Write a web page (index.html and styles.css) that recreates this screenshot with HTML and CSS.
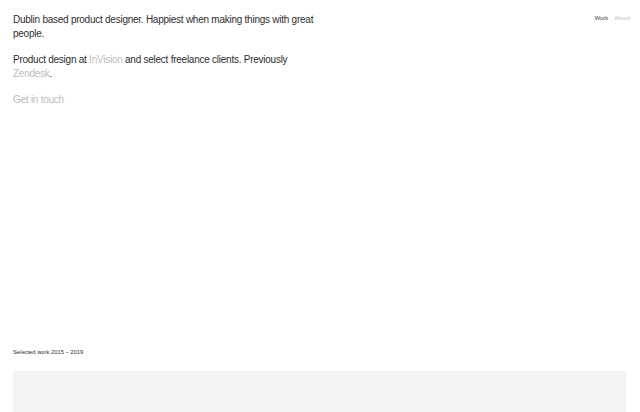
FILE: index.html
```html
<!DOCTYPE html>
<html lang="en">
<head>
<meta charset="utf-8">
<title>Portfolio</title>
<link rel="stylesheet" href="styles.css">
</head>
<body>
<div class="page">
  <header class="hero">
    <div class="intro">
      <p>Dublin based product designer. Happiest when making things with great people.</p>
      <p>Product design at <a class="muted" href="#">InVision</a> and select freelance clients. Previously <a class="muted" href="#">Zendesk</a>.</p>
      <p><a class="muted" href="#">Get in touch</a></p>
    </div>
    <nav class="nav">
      <a class="nav-link active" href="#">Work</a>
      <a class="nav-link" href="#">About</a>
    </nav>
  </header>
  <section class="work">
    <h2 class="work-label">Selected work 2015 – 2019</h2>
    <div class="work-card"></div>
  </section>
</div>
</body>
</html>
```
FILE: styles.css
```css
html, body {
  margin: 0;
  padding: 0;
  background: #fff;
}
body {
  font-family: "Liberation Sans", Arial, sans-serif;
  color: #2e2e2e;
}
.page {
  padding: 0 14px 0 13px;
}
.hero {
  display: flex;
  justify-content: space-between;
  align-items: flex-start;
  height: 346px;
}
.intro {
  width: 310px;
  padding-top: 13px;
  font-size: 10px;
  letter-spacing: -0.25px;
  line-height: 14px;
}
.intro p {
  margin: 0 0 12px;
}
.muted {
  color: #bcbcbc;
  text-decoration: none;
}
.nav {
  display: flex;
  gap: 6px;
  margin-right: -4px;
  padding-top: 15px;
  font-size: 6px;
}
.nav-link {
  color: #bcbcbc;
  text-decoration: none;
}
.nav-link.active {
  color: #444;
}
.work-label {
  margin: 0;
  font-weight: normal;
  font-size: 5.8px;
  line-height: 12px;
  color: #2e2e2e;
}
.work-card {
  margin-top: 13px;
  height: 200px;
  background: #f4f4f4;
}
```
